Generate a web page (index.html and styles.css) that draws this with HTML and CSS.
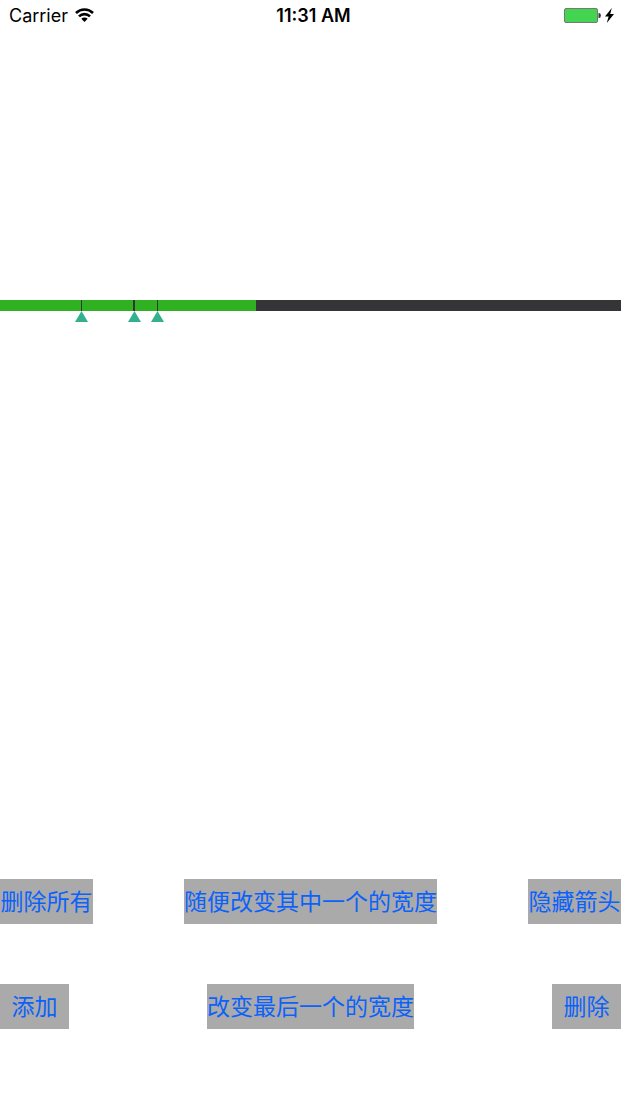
FILE: index.html
```html
<!DOCTYPE html>
<html lang="zh-CN">
<head>
<meta charset="utf-8">
<meta name="viewport" content="width=device-width, initial-scale=1">
<title>Progress</title>
<link rel="stylesheet" href="styles.css">
</head>
<body>
<div class="screen">
  <header class="status">
    <div class="carrier"><span>Carrier</span>
      <svg class="wifi" viewBox="0 0 19 14" aria-hidden="true"><path d="M1 5a12.2 12.2 0 0 1 17 0M4 8.4a7.9 7.9 0 0 1 11 0" fill="none" stroke="#000" stroke-width="2.6"/><path d="M9.5 14 6.3 10.8a4.6 4.6 0 0 1 6.4 0z"/></svg>
    </div>
    <time class="clock">11:31 AM</time>
    <div class="power">
      <svg class="battery" viewBox="0 0 38 16" aria-hidden="true"><rect x=".5" y=".5" width="33" height="14" rx="1.5" fill="#43d551" stroke="#777"/><path d="M34.5 5h.5a1.5 2 0 0 1 0 5h-.5z" fill="#333"/></svg>
      <svg class="bolt" viewBox="0 0 9 15" aria-hidden="true"><path d="M6.8 0 0 8.6h3.6L1.8 15 9 6H5.2z"/></svg>
    </div>
  </header>
  <main class="content">
    <div class="progress" role="progressbar" aria-label="进度" aria-valuenow="41">
      <div class="fill"></div>
      <span class="mark" style="left:81px"></span>
      <span class="mark wide" style="left:133px"></span>
      <span class="mark" style="left:157px"></span>
    </div>
    <div class="actions">
      <div class="row"><button class="medium">删除所有</button><button>随便改变其中一个的宽度</button><button class="medium">隐藏箭头</button></div>
      <div class="row"><button class="short">添加</button><button>改变最后一个的宽度</button><button class="short">删除</button></div>
    </div>
  </main>
</div>
</body>
</html>
```
FILE: styles.css
```css
* { box-sizing: border-box; }
body { margin: 0; background: #fff; color: #000; font-family: Inter, "Noto Sans CJK SC", sans-serif; }
.screen { min-height: 100vh; display: flex; flex-direction: column; }
.status { display: grid; grid-template-columns: 1fr auto 1fr; align-items: center; height: 32px; padding: 0 7px 0 9px; font-size: 18px; line-height: 20px; }
.carrier { display: flex; align-items: center; gap: 7px; }
.wifi { width: 19px; height: 14px; margin-bottom: 2px; }
.clock { padding-left: 4px; font-weight: 600; }
.power { display: flex; align-items: center; justify-content: flex-end; gap: 3px; }
.battery { width: 38px; height: 16px; }
.bolt { width: 9px; height: 15px; margin-bottom: 2px; }
.content { flex: 1; display: flex; flex-direction: column; justify-content: space-between; padding: 268px 0 75px; }
.progress { position: relative; height: 11px; background: #353437; }
.fill { width: 256px; height: 11px; background: #30b121; }
.mark { position: absolute; top: 0; width: 1px; height: 11px; background: #353437; }
.mark::after { content: ""; position: absolute; top: 11px; left: -6px; width: 13px; height: 11px; background: #32b08f; clip-path: polygon(50% 0, 100% 100%, 0 100%); }
.wide { width: 2px; }
.wide::after { left: -5px; }
.actions { display: flex; flex-direction: column; gap: 60px; }
.row { display: grid; grid-template-columns: 1fr auto 1fr; }
button { height: 45px; padding: 0 0 2px; border: 0; background: #aaa; color: #0b62fb; font-family: "Noto Sans CJK SC", sans-serif; font-size: 23px; line-height: 43px; white-space: nowrap; }
button:first-child { justify-self: start; }
button:last-child { justify-self: end; }
.medium { width: 93px; }
.short { width: 69px; }
```
